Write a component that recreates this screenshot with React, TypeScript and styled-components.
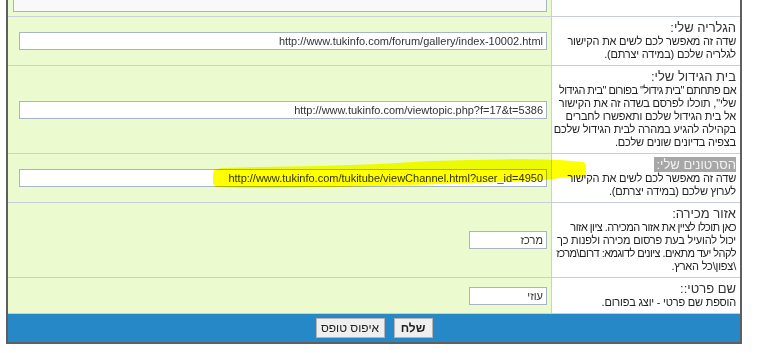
import React from "react";
import styled, { createGlobalStyle } from "styled-components";

const GlobalStyle = createGlobalStyle`
  body {
    margin: 0;
    background: #ffffff;
    font-family: "Liberation Sans", "DejaVu Sans", Arial, sans-serif;
    overflow: hidden;
  }
`;

const Page = styled.div`
  margin-top: -46px;
`;

const Frame = styled.div`
  margin-left: 6px;
  width: 736px;
  box-sizing: border-box;
  border: 2px solid #5f5f5f;
  border-top: none;
  background: #ffffff;
`;

const Row = styled.div`
  position: relative;
  display: grid;
  grid-template-columns: 189px 1fr;
  border-bottom: 1px solid #c9ced8;
`;

const DescCell = styled.div`
  background: #ffffff;
  border-left: 1px solid #c9ced8;
  padding: 4px 4px 4px 2px;
  color: #222222;
  overflow: hidden;
`;

const FieldCell = styled.div<{ $alignEnd?: boolean }>`
  background: #ecfbcf;
  display: flex;
  align-items: ${(p) => (p.$alignEnd ? "flex-end" : "center")};
  padding: ${(p) => (p.$alignEnd ? "8px 4px 4px 4px" : "0 4px")};
`;

const Title = styled.div<{ $marked?: boolean }>`
  font-size: 13px;
  line-height: 14px;
  color: ${(p) => (p.$marked ? "#f2f2f2" : "#333333")};
  white-space: nowrap;

  span {
    background: ${(p) => (p.$marked ? "#a7a7a7" : "transparent")};
    padding-left: ${(p) => (p.$marked ? "2px" : "0")};
  }
`;

const Desc = styled.div<{ $squeeze?: boolean }>`
  font-size: 11px;
  line-height: 13px;
  letter-spacing: ${(p) => (p.$squeeze ? "-0.55px" : "-0.2px")};
  white-space: nowrap;
`;

const TextBox = styled.input<{ $w: number }>`
  width: ${(p) => p.$w}px;
  height: 18px;
  box-sizing: border-box;
  border: 1px solid #a9b4c2;
  background: #ffffff;
  padding: 0 3px;
  margin: 0;
  font-family: "Liberation Sans", "DejaVu Sans", Arial, sans-serif;
  font-size: 11px;
  color: #333333;
  text-align: right;
  outline: none;
`;

const Area = styled.textarea`
  width: 534px;
  height: 50px;
  box-sizing: border-box;
  border: 1px solid #a9b4c2;
  background: #f9f9f9;
  resize: none;
  margin: 0;
  display: block;
`;

const ButtonBar = styled.div`
  background: #2688c6;
  height: 28px;
  display: flex;
  justify-content: center;
  align-items: center;
  gap: 9px;
`;

const FormButton = styled.button<{ $w: number; $primary?: boolean }>`
  width: ${(p) => p.$w}px;
  height: 20px;
  box-sizing: border-box;
  padding: 0;
  border: 1px solid #b4b4b4;
  background: #efefef;
  color: #222222;
  font-family: "Liberation Sans", "DejaVu Sans", Arial, sans-serif;
  font-size: 12px;
  font-weight: ${(p) => (p.$primary ? "bold" : "normal")};
`;

const Marker = styled.svg`
  position: absolute;
  left: 0;
  top: 0;
  width: 732px;
  height: 48px;
  overflow: visible;
  pointer-events: none;
  mix-blend-mode: multiply;
`;

type Field = {
  title: string;
  lines: string[];
  value: string;
  width: number;
  marked?: boolean;
};

const fields: Field[] = [
  {
    title: "הגלריה שלי:",
    lines: ["שדה זה מאפשר לכם לשים את הקישור", "לגלריה שלכם (במידה יצרתם)."],
    value: "http://www.tukinfo.com/forum/gallery/index-10002.html",
    width: 528,
  },
  {
    title: "בית הגידול שלי:",
    lines: [
      'אם פתחתם "בית גידול" בפורום "בית הגידול',
      'שלי", תוכלו לפרסם בשדה זה את הקישור',
      "אל בית הגידול שלכם ותאפשרו לחברים",
      "בקהילה להגיע במהרה לבית הגידול שלכם",
      "בצפיה בדיונים שונים שלכם.",
    ],
    value: "http://www.tukinfo.com/viewtopic.php?f=17&t=5386",
    width: 528,
  },
  {
    title: "הסרטונים שלי:",
    lines: ["שדה זה מאפשר לכם לשים את הקישור", "לערוץ שלכם (במידה יצרתם)."],
    value: "http://www.tukinfo.com/tukitube/viewChannel.html?user_id=4950",
    width: 528,
    marked: true,
  },
  {
    title: "אזור מכירה:",
    lines: [
      "כאן תוכלו לציין את אזור המכירה. ציון אזור",
      "יכול להועיל בעת פרסום מכירה ולפנות כך",
      "לקהל יעד מתאים. ציונים לדוגמא: דרום\\מרכז",
      "\\צפון\\כל הארץ.",
    ],
    value: "מרכז",
    width: 78,
  },
  {
    title: "שם פרטי::",
    lines: ["הוספת שם פרטי - יוצג בפורום."],
    value: "עוזי",
    width: 78,
  },
];

// freehand highlighter stroke over the video row, coords relative to the row
const markerPath =
  "M206 16 L214 14 L252 13 L312 12 L372 10 L422 7 L462 6 L512 5 L552 6 L576 8 " +
  "L578 11 L578 21 L575 23 L552 24 L537 26 L492 28 L432 30 L372 32 L322 33 " +
  "L272 34 L232 34 L208 33 L205 30 L205 20 Z";

export default function App() {
  return (
    <>
      <GlobalStyle />
      <Page>
        <Frame dir="rtl">
          <Row>
            <DescCell />
            <FieldCell $alignEnd>
              <Area readOnly />
            </FieldCell>
          </Row>
          {fields.map((f) => (
            <Row key={f.title}>
              <DescCell>
                <Title $marked={f.marked}>
                  <span>{f.title}</span>
                </Title>
                {f.lines.map((l) => (
                  <Desc key={l} $squeeze={l.length > 38}>
                    {l}
                  </Desc>
                ))}
              </DescCell>
              <FieldCell>
                <TextBox
                  $w={f.width}
                  dir={f.width > 100 ? "ltr" : "rtl"}
                  value={f.value}
                  readOnly
                />
              </FieldCell>
              {f.marked && (
                <Marker viewBox="0 0 732 48">
                  <path d={markerPath} fill="#ffff00" />
                </Marker>
              )}
            </Row>
          ))}
          <ButtonBar>
            <FormButton $w={39} $primary>
              שלח
            </FormButton>
            <FormButton $w={69}>איפוס טופס</FormButton>
          </ButtonBar>
        </Frame>
      </Page>
    </>
  );
}
